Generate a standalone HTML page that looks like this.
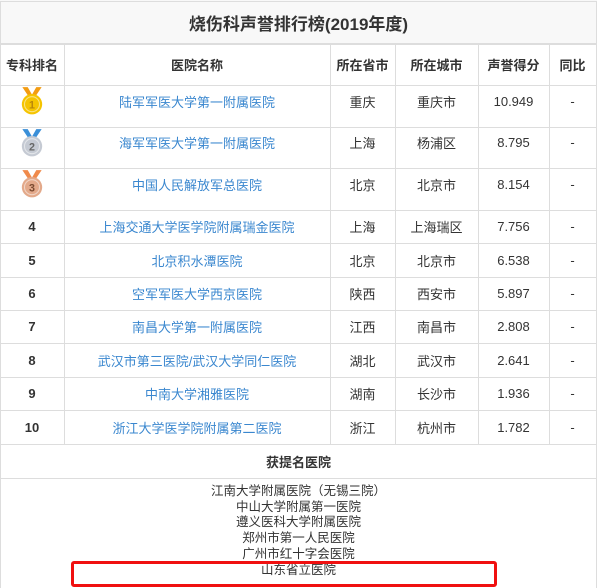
<!DOCTYPE html>
<html><head><meta charset="utf-8"><style>
body{margin:0;width:600px;height:588px;overflow:hidden;background:#fff;font-family:"Liberation Sans","Noto Sans CJK SC",sans-serif;font-size:13px;color:#333}
.c{position:absolute;display:flex;align-items:center;justify-content:center;text-align:center}
.h{position:absolute;left:0;width:597px;height:1px;background:#ddd}
.v{position:absolute;width:1px;background:#ddd}
a{color:#3a87cf;text-decoration:none}
</style></head><body>
<div style="position:absolute;left:0;top:0;width:597px;height:44px;background:#f8f8f8"></div>
<div class="c" style="left:0;top:0;width:597px;height:44px;font-size:17px;font-weight:bold;color:#333">烧伤科声誉排行榜(2019年度)</div>
<div class="h" style="top:1px"></div>
<div class="h" style="top:43px;height:2px"></div>
<div class="h" style="top:85px"></div>
<div class="h" style="top:127px"></div>
<div class="h" style="top:168px"></div>
<div class="h" style="top:210px"></div>
<div class="h" style="top:243px"></div>
<div class="h" style="top:277px"></div>
<div class="h" style="top:310px"></div>
<div class="h" style="top:343px"></div>
<div class="h" style="top:377px"></div>
<div class="h" style="top:410px"></div>
<div class="h" style="top:444px"></div>
<div class="h" style="top:478px"></div>
<div class="v" style="left:0;top:1px;height:587px"></div>
<div class="v" style="left:596px;top:1px;height:587px"></div>
<div class="v" style="left:64px;top:44px;height:400px"></div>
<div class="v" style="left:330px;top:44px;height:400px"></div>
<div class="v" style="left:395px;top:44px;height:400px"></div>
<div class="v" style="left:478px;top:44px;height:400px"></div>
<div class="v" style="left:549px;top:44px;height:400px"></div>

<div id="t"></div>
<script>
var cols=[[0,64],[64,330],[330,395],[395,478],[478,549],[549,596]];
var rows=[[44,85],[85,127],[127,168],[168,210],[210,243],[243,277],[277,310],[310,343],[343,377],[377,410],[410,444]];
var d=[["专科排名","医院名称","所在省市","所在城市","声誉得分","同比"],
["m1","陆军军医大学第一附属医院","重庆","重庆市","10.949","-"],
["m2","海军军医大学第一附属医院","上海","杨浦区","8.795","-"],
["m3","中国人民解放军总医院","北京","北京市","8.154","-"],
["4","上海交通大学医学院附属瑞金医院","上海","上海瑞区","7.756","-"],
["5","北京积水潭医院","北京","北京市","6.538","-"],
["6","空军军医大学西京医院","陕西","西安市","5.897","-"],
["7","南昌大学第一附属医院","江西","南昌市","2.808","-"],
["8","武汉市第三医院/武汉大学同仁医院","湖北","武汉市","2.641","-"],
["9","中南大学湘雅医院","湖南","长沙市","1.936","-"],
["10","浙江大学医学院附属第二医院","浙江","杭州市","1.782","-"]];
var med={m1:["#f5c400","#f39c12","1","#b8860b"],m2:["#c5cad3","#3a8fd8","2","#666"],m3:["#e3a98a","#f08a4b","3","#7a4a30"]};
var h="";
for(var r=0;r<d.length;r++)for(var c=0;c<6;c++){
 var x=cols[c][0],w=cols[c][1]-x,y=rows[r][0],hh=rows[r][1]-y,t=d[r][c],st="";
 if(r==0)st="font-weight:bold;";
 if(r>0&&c==0)st="font-weight:bold;";
 if(r>0&&r<4)hh=Math.round(hh*0.76);
 if(r>0&&c==1)t="<a>"+t+"</a>";
 if(med[t]){var m=med[t];t='<svg width="26" height="30" viewBox="0 0 24 28"><path d="M3 1l6 9 3-2-4-7z M21 1l-6 9-3-2 4-7z" fill="'+m[1]+'"/><circle cx="12" cy="17" r="9.5" fill="'+m[0]+'"/><circle cx="12" cy="17" r="7" fill="none" stroke="rgba(255,255,255,.5)"/><text x="12" y="21" font-size="10" text-anchor="middle" fill="'+m[3]+'" font-family="Liberation Sans">'+m[2]+'</text></svg>';}
 h+='<div class="c" style="left:'+x+'px;top:'+y+'px;width:'+w+'px;height:'+hh+'px;'+st+'">'+t+'</div>';
}
document.getElementById("t").innerHTML=h;
</script>
<div class="c" style="left:0;top:444px;width:597px;height:34px;font-weight:bold">获提名医院</div>
<div style="position:absolute;left:0;top:484px;width:597px;text-align:center;line-height:15.7px;font-size:12.5px;color:#333">江南大学附属医院（无锡三院）<br>中山大学附属第一医院<br>遵义医科大学附属医院<br>郑州市第一人民医院<br>广州市红十字会医院<br>山东省立医院</div>
<div style="position:absolute;left:71px;top:561px;width:420px;height:20px;border:3px solid #f01010;border-radius:3px"></div>
</body></html>
